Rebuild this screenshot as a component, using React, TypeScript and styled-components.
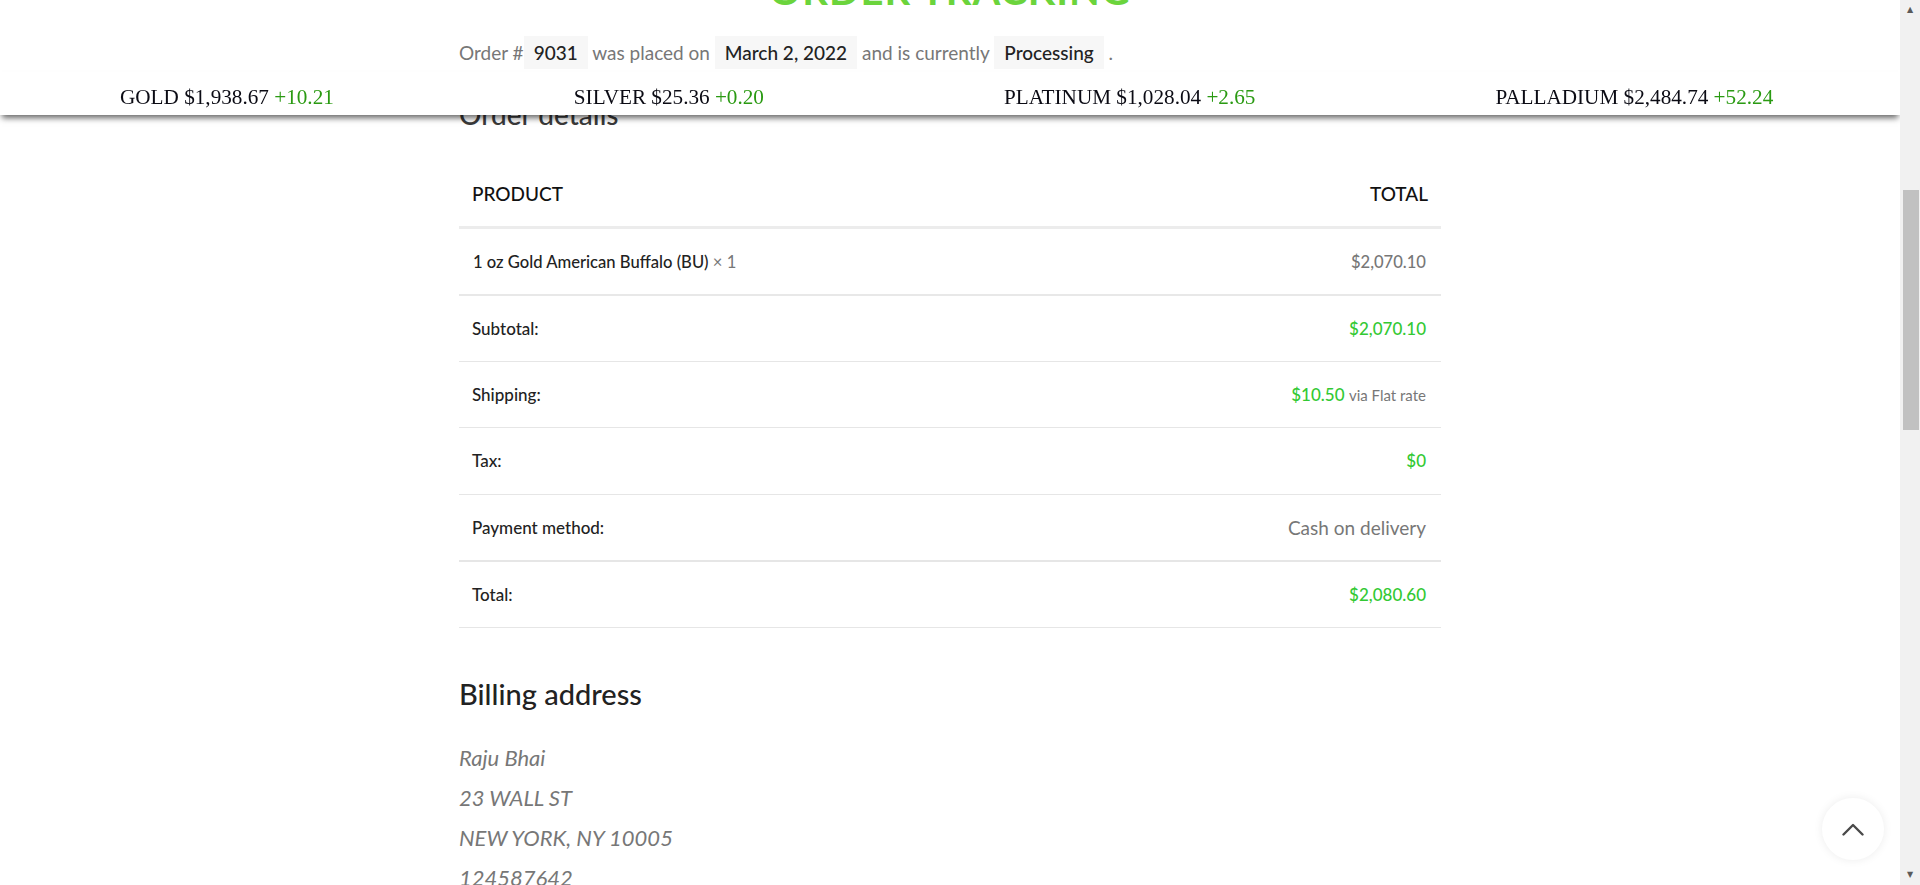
import React from 'react';
import styled, { createGlobalStyle } from 'styled-components';

const GlobalStyle = createGlobalStyle`
  html {
    overflow: hidden;
  }
  body {
    margin: 0;
    background: #fff;
    font-family: Lato, "Open Sans", Arial, sans-serif;
    color: #222;
  }
`;

const Page = styled.div`
  margin-right: 20px;
`;

const ScrollRail = styled.div`
  position: fixed;
  top: 0;
  right: 0;
  bottom: 0;
  width: 20px;
  background: #f1f1f1;
  display: flex;
  flex-direction: column;
  align-items: center;
  z-index: 20;
`;

const RailArrow = styled.span`
  height: 20px;
  line-height: 20px;
  font-size: 8px;
  color: #5a5a5a;
  font-family: "DejaVu Sans", sans-serif;
`;

const RailThumb = styled.div`
  margin-top: 170px;
  width: 16px;
  height: 240px;
  margin-left: 2px;
  background: #c1c1c1;
`;

const RailSpacer = styled.div`
  flex: 1;
`;

const Ticker = styled.div`
  position: fixed;
  top: 72px;
  left: 0;
  right: 20px;
  height: 43px;
  box-sizing: border-box;
  padding: 7px 0 0 120px;
  display: flex;
  align-items: center;
  gap: 240px;
  background: #fff;
  box-shadow: 0 5px 6px -2px rgba(0, 0, 0, 0.6);
  z-index: 10;
`;

const TickerItem = styled.span`
  font-family: "Liberation Serif", "Times New Roman", serif;
  font-size: 21.2px;
  color: #0b0b14;
  white-space: nowrap;
`;

const Change = styled.span`
  color: #2a9a12;
`;

const Main = styled.main`
  width: 982px;
  margin: 0 auto;
  padding-bottom: 200px;
`;

const Title = styled.h1`
  margin: -34px 0 0;
  text-align: center;
  font-size: 40px;
  line-height: 48px;
  font-weight: 700;
  letter-spacing: 1px;
  color: #6bd43c;
`;

const OrderLine = styled.p`
  margin: 22px 0 0;
  font-size: 19px;
  line-height: 33px;
  color: #777;
`;

const Mark = styled.mark`
  display: inline-block;
  background: #f7f7f7;
  color: #222;
  font-weight: 500;
  padding: 6px 10px;
  line-height: 21px;
`;

const SectionTitle = styled.h2<{ $top: number }>`
  margin: ${(p) => p.$top}px 0 0;
  font-size: ${(p) => (p.$top > 40 ? 29 : 28)}px;
  line-height: 34px;
  font-weight: 500;
  color: ${(p) => (p.$top > 40 ? '#222' : '#3a3a3a')};
`;

const Table = styled.table`
  width: 100%;
  margin-top: 29px;
  border-collapse: collapse;
`;

const HeadCell = styled.th<{ $right?: boolean }>`
  height: 66px;
  padding: 0 13px;
  border-bottom: 3px solid #ececec;
  text-align: ${(p) => (p.$right ? 'right' : 'left')};
  font-size: 19px;
  font-weight: 500;
  color: #111;
`;

const ItemCell = styled.td<{ $right?: boolean }>`
  height: 65px;
  padding: 0 15px 0 14px;
  border-bottom: 2px solid #e8e8e8;
  text-align: ${(p) => (p.$right ? 'right' : 'left')};
  font-size: 16.6px;
  font-weight: 500;
  color: ${(p) => (p.$right ? '#777' : '#222')};
`;

const Qty = styled.strong`
  font-weight: 400;
  color: #777;
`;

const FootRow = styled.tr<{ $thick?: boolean }>`
  border-bottom: ${(p) => (p.$thick ? 2 : 1)}px solid #e6e6e6;
`;

const FootLabel = styled.th`
  height: 65.2px;
  padding: 0 13px;
  text-align: left;
  font-size: 17px;
  font-weight: 500;
  color: #222;
`;

const FootValue = styled.td`
  padding: 0 15px 0 13px;
  text-align: right;
  font-size: 17px;
  color: #777;
`;

const Green = styled.span`
  color: #33c933;
  font-weight: 500;
`;

const Small = styled.small`
  font-size: 15px;
  color: #777;
`;

const Big = styled.span`
  font-size: 19px;
`;

const Address = styled.address`
  margin-top: 27px;
  font-size: 22px;
  line-height: 40px;
  font-style: italic;
  color: #777;
`;

const TopButton = styled.button`
  position: fixed;
  right: 36px;
  bottom: 25px;
  width: 62px;
  height: 62px;
  border: none;
  border-radius: 50%;
  background: #fff;
  box-shadow: 0 0 10px rgba(0, 0, 0, 0.08);
  display: flex;
  align-items: center;
  justify-content: center;
  cursor: pointer;
`;

const prices = [
  { metal: 'GOLD', price: '$1,938.67', change: '+10.21' },
  { metal: 'SILVER', price: '$25.36', change: '+0.20' },
  { metal: 'PLATINUM', price: '$1,028.04', change: '+2.65' },
  { metal: 'PALLADIUM', price: '$2,484.74', change: '+52.24' },
];

export default function App() {
  return (
    <>
      <GlobalStyle />
      <Page>
        <Ticker>
          {prices.map((p) => (
            <TickerItem key={p.metal}>
              {p.metal} {p.price} <Change>{p.change}</Change>
            </TickerItem>
          ))}
        </Ticker>
        <Main>
          <Title>ORDER TRACKING</Title>
          <OrderLine>
            Order #<Mark>9031</Mark> was placed on <Mark>March 2, 2022</Mark> and is currently{' '}
            <Mark>Processing</Mark> .
          </OrderLine>
          <SectionTitle $top={28}>Order details</SectionTitle>
          <Table>
            <thead>
              <tr>
                <HeadCell>PRODUCT</HeadCell>
                <HeadCell $right>TOTAL</HeadCell>
              </tr>
            </thead>
            <tbody>
              <tr>
                <ItemCell>
                  1 oz Gold American Buffalo (BU) <Qty>× 1</Qty>
                </ItemCell>
                <ItemCell $right>$2,070.10</ItemCell>
              </tr>
            </tbody>
            <tfoot>
              <FootRow>
                <FootLabel>Subtotal:</FootLabel>
                <FootValue><Green>$2,070.10</Green></FootValue>
              </FootRow>
              <FootRow>
                <FootLabel>Shipping:</FootLabel>
                <FootValue>
                  <Green>$10.50</Green> <Small>via Flat rate</Small>
                </FootValue>
              </FootRow>
              <FootRow>
                <FootLabel>Tax:</FootLabel>
                <FootValue><Green>$0</Green></FootValue>
              </FootRow>
              <FootRow $thick>
                <FootLabel>Payment method:</FootLabel>
                <FootValue><Big>Cash on delivery</Big></FootValue>
              </FootRow>
              <FootRow>
                <FootLabel>Total:</FootLabel>
                <FootValue><Green>$2,080.60</Green></FootValue>
              </FootRow>
            </tfoot>
          </Table>
          <SectionTitle $top={49}>Billing address</SectionTitle>
          <Address>
            Raju Bhai
            <br />
            23 WALL ST
            <br />
            NEW YORK, NY 10005
            <br />
            124587642
            <br />
            rajubhai@example.com
          </Address>
        </Main>
      </Page>
      <TopButton aria-label="Back to top">
        <svg width="22" height="13" viewBox="0 0 22 13" fill="none">
          <polyline points="1.5,11.5 11,2 20.5,11.5" stroke="#4a4a4a" strokeWidth="2.4" strokeLinecap="round" strokeLinejoin="round" />
        </svg>
      </TopButton>
      <ScrollRail>
        <RailArrow>▲</RailArrow>
        <RailThumb />
        <RailSpacer />
        <RailArrow>▼</RailArrow>
      </ScrollRail>
    </>
  );
}
